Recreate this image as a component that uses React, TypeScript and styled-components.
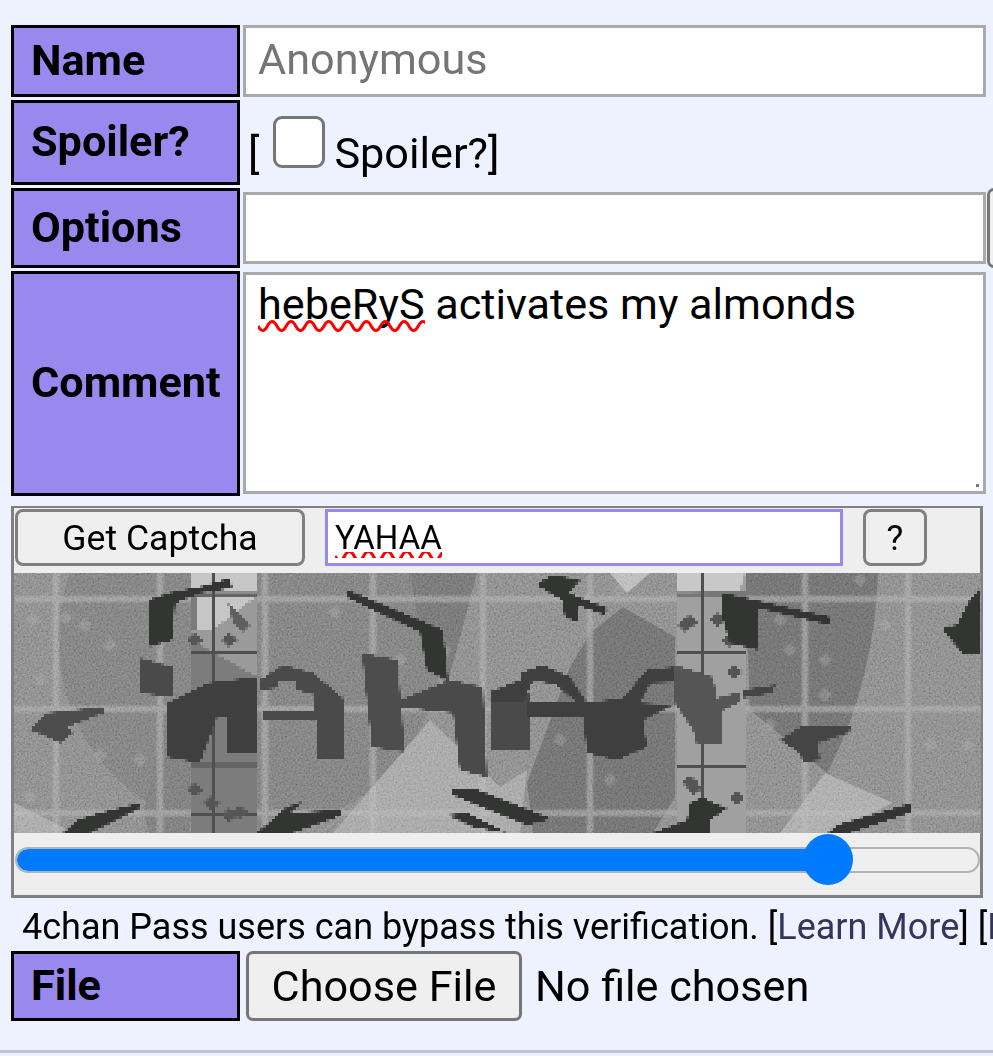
import React from "react";
import styled, { createGlobalStyle } from "styled-components";

const GlobalStyle = createGlobalStyle`
  html, body {
    margin: 0;
    padding: 0;
    background: #eef2ff;
    overflow: hidden;
  }
  body {
    font-family: Roboto, "Liberation Sans", sans-serif;
    color: #000;
  }
`;

const Page = styled.main`
  width: 993px;
  height: 1056px;
  overflow: hidden;
  padding: 25px 0 0 11px;
  box-sizing: border-box;
`;

const FormGrid = styled.div`
  display: grid;
  grid-template-columns: 229px 743px;
  grid-auto-rows: auto;
  gap: 3px;
`;

const Label = styled.div<{ $h: number }>`
  box-sizing: border-box;
  height: ${({ $h }) => $h}px;
  background: #9988ee;
  border: 3px solid #000;
  padding: 0 0 2px 17px;
  display: flex;
  align-items: center;
  font-size: 43.2px;
  font-weight: 700;
`;

const Field = styled.div`
  display: flex;
  align-items: center;
  position: relative;
`;

const TextInput = styled.input<{ $h: number }>`
  box-sizing: border-box;
  width: 743px;
  height: ${({ $h }) => $h}px;
  border: 3px solid #aaa;
  background: #fff;
  padding: 0 12px 3px;
  font: 400 43.2px Roboto, sans-serif;
  outline: none;
  &::placeholder {
    color: #757575;
    opacity: 1;
  }
`;

const OptionsEdge = styled.div`
  position: absolute;
  left: 744px;
  top: 0;
  width: 40px;
  height: 80px;
  box-sizing: border-box;
  border: 3px solid #767676;
  border-radius: 7px;
  background: #efefef;
`;

const SpoilerLine = styled.label`
  font-size: 43.2px;
  padding: 12px 0 0 5px;
  white-space: nowrap;
  line-height: 56px;
`;

const SpoilerBox = styled.input`
  appearance: none;
  box-sizing: border-box;
  width: 52px;
  height: 52px;
  margin: 0 9px 0 14px;
  border: 3px solid #767676;
  border-radius: 9px;
  background: #fff;
  vertical-align: 0;
`;

const CommentBox = styled.div`
  box-sizing: border-box;
  position: relative;
  width: 743px;
  height: 222px;
  align-self: flex-start;
  margin-top: 1px;
  border: 3px solid #aaa;
  background: #fff;
  padding: 4px 12px;
  font-size: 43.2px;
  line-height: 52px;

  &::after {
    content: "";
    position: absolute;
    right: 4px;
    bottom: 4px;
    width: 3px;
    height: 3px;
    background: #777;
  }
`;

const Misspelled = styled.span`
  position: relative;
  display: inline-block;
`;

const Squiggle = styled.svg`
  position: absolute;
  left: 0;
  bottom: -1px;
  width: 100%;
  height: 12px;
  display: block;
`;

const SquiggleCut = styled(Squiggle)`
  height: 6px;
  bottom: 5px;
`;

const CaptchaPanel = styled.section`
  box-sizing: border-box;
  width: 972px;
  height: 392px;
  margin-top: 10px;
  border: 3px solid #808080;
  border-top-width: 2px;
  background: #eee;
  display: flex;
  flex-direction: column;
`;

const CaptchaBar = styled.div`
  height: 65px;
  flex: none;
  display: flex;
  align-items: flex-start;
  padding: 1px 0 0 1px;
  box-sizing: border-box;
`;

const PlainButton = styled.button<{ $w: number; $ml?: number }>`
  box-sizing: border-box;
  width: ${({ $w }) => $w}px;
  height: 57px;
  margin-left: ${({ $ml }) => $ml ?? 0}px;
  border: 3px solid #808080;
  border-radius: 8px;
  background: #efefef;
  color: #000;
  font: 400 35.6px Roboto, sans-serif;
  padding: 0;
`;

const AnswerField = styled.div`
  box-sizing: border-box;
  width: 518px;
  height: 57px;
  margin-left: 20px;
  border: 3px solid #9988ee;
  background: #fff;
  padding: 0 7px;
  font-size: 33px;
  line-height: 51px;
  overflow: hidden;
`;

const CaptchaImage = styled.svg`
  display: block;
  flex: none;
  width: 967px;
  height: 260px;
`;

const SliderWrap = styled.div`
  position: relative;
  flex: 1;
`;

const SliderTrack = styled.div`
  position: absolute;
  left: 1px;
  right: 0;
  top: 14px;
  height: 26px;
  box-sizing: border-box;
  border: 2px solid #b2b2b2;
  border-radius: 13px;
  background: #efefef;
  overflow: hidden;
`;

const SliderFill = styled.div`
  height: 100%;
  background: #007bff;
  border-radius: 13px 0 0 13px;
`;

const SliderThumb = styled.div`
  position: absolute;
  top: 1px;
  width: 50px;
  height: 51px;
  border-radius: 50%;
  background: #007bff;
`;

const PassNote = styled.div`
  width: 982px;
  margin: 11px 0 0;
  padding-left: 11px;
  box-sizing: border-box;
  height: 42px;
  line-height: 37px;
  font-size: 36px;
  white-space: nowrap;
  overflow: hidden;
`;

const NoteLink = styled.a`
  color: #34345c;
  text-decoration: none;
`;

const FileField = styled(Field)`
  gap: 13px;
  font-size: 43.2px;
`;

const FileButton = styled.button`
  box-sizing: border-box;
  width: 276px;
  height: 70px;
  margin-left: 3px;
  border: 3px solid #767676;
  border-radius: 7px;
  background: #efefef;
  color: #000;
  font: 400 43.2px Roboto, sans-serif;
  padding: 0;
`;

const FormRule = styled.hr`
  margin: 29px 0 0 -11px;
  width: 993px;
  height: 3px;
  border: none;
  background: #b7c5d9;
`;

const wave = (w: number, y: number) => {
  let d = `M0 ${y}`;
  for (let x = 0; x < w; x += 9.4) {
    const up = Math.round(x / 9.4) % 2 === 0;
    d += ` Q${x + 4.7} ${up ? y + 9 : y - 9} ${x + 9.4} ${y}`;
  }
  return d;
};

const background: [string, string][] = [
  ["#6c6c6c", "410,573 477,573 448,682 427,672"],
  ["#b4b4b4", "610,573 650,573 627,593"],
  ["#a0a0a0", "14,803 75,833 14,833"],
  ["#9d9d9d", "333,833 430,720 500,787 527,770 520,833"],
  ["#686868", "590,633 623,607 675,637 675,797 653,833 533,833 527,783 570,667"],
  ["#a3a3a3", "780,833 825,773 893,803 828,833"],
  ["#727272", "143,815 170,700 190,700 190,833 150,833"],
];

const gridX = [56, 160, 265, 373, 483, 590, 805, 908];
const gridY = [599, 709, 813];

const strips: [string, string][] = [
  ["#7c7c7c", "190,573 257,573 257,833 190,833"],
  ["#c6c6c6", "190,573 257,573 257,594 190,594"],
  ["#c6c6c6", "196,596 257,596 213,630 196,630"],
  ["#9a9a9a", "213,630 257,596 257,677 213,652 190,640 190,630"],
  ["#a0a0a0", "676,573 745,573 745,833 676,833"],
  ["#c8c8c8", "676,573 745,573 740,590 676,594"],
];

const stripLines = [
  "213,573 213,833",
  "190,594 257,594",
  "190,652 257,652",
  "190,765 257,765",
  "190,814 257,814",
  "703,573 703,833",
  "676,594 745,594",
  "676,652 745,652",
  "676,766 745,766",
];

const midShapes: [string, string][] = [
  ["#4a4a4a", "140,658 172,667 172,697 140,693"],
  ["#3f3f3f", "167,703 208,683 257,677 257,753 228,753 228,717 217,717 200,763 167,757"],
  ["#4a4a4a", "260,680 283,665 313,673 343,698 343,760 317,760 317,720 263,720 263,710 315,710 315,695 297,690 297,680 277,680 277,688 260,690"],
  ["#4d4d4d", "30,730 47,713 103,707 103,713 67,727 73,733 60,743 43,735"],
  ["#4d4d4d", "362,653 397,660 405,752 372,747"],
  ["#4a4a4a", "400,700 450,680 483,687 487,777 460,770 453,713 400,707"],
  ["#4a4a4a", "490,692 530,692 530,750 490,750"],
  ["#3f3f3f", "520,673 543,665 570,677 587,703 623,698 647,670 673,667 673,682 650,683 640,703 673,705 643,720 647,747 617,760 587,753 583,717 527,717 527,703 577,703 557,685 533,680 523,703 490,703 490,692 520,680"],
  ["#555555", "675,665 713,677 717,698 740,692 740,702 723,710 723,743 697,745 693,730 675,703"],
  ["#454545", "743,690 775,685 773,693 743,698"],
  ["#454545", "780,740 800,727 852,727 848,733 818,743 820,760 803,762 800,753"],
  ["#5f5f5f", "228,604 238,612 250,625 243,632 233,622"],
];

const darkShapes = [
  "148,600 173,592 200,587 230,578 232,588 200,593 175,603 172,640 148,647",
  "348,590 443,630 448,680 427,670 420,632 348,598",
  "63,833 77,820 100,813 140,803 140,808 110,823 90,833",
  "257,833 287,807 302,802 290,813 340,810 342,815 293,833",
  "452,788 473,788 547,817 547,820 527,825 477,805 453,795",
  "448,815 467,813 507,833 473,827",
  "540,582 553,575 580,580 568,593 607,608 605,615 577,605 577,622 565,617 562,600 540,587",
  "723,593 830,617 830,625 758,608 758,650 730,643 723,620",
  "981,587 981,653 963,653 945,633 945,627 957,625 970,600",
  "653,833 687,820 690,803 703,797 713,803 727,808 710,820 710,833",
  "828,833 837,825 912,803 912,812 850,833",
];

const specks = [
  [690, 622], [718, 620], [730, 640], [195, 640], [230, 640], [698, 720],
  [195, 790], [212, 803], [230, 815], [695, 788], [737, 798], [240, 812],
  [686, 625], [735, 672], [690, 782],
];

const lightSpecks = [
  [33, 620], [66, 618], [85, 625], [110, 645], [40, 680], [335, 612],
  [400, 660], [445, 650], [30, 797], [620, 590], [780, 620], [790, 650],
  [860, 580], [885, 625], [825, 660], [825, 695], [770, 725], [930, 745],
  [968, 745], [610, 780], [560, 740], [100, 755], [140, 760],
];

const CaptchaPicture = () => (
  <CaptchaImage viewBox="14 573 967 260" preserveAspectRatio="none">
    <defs>
      <filter id="grain" x="0" y="0" width="100%" height="100%">
        <feTurbulence type="fractalNoise" baseFrequency="0.55" numOctaves="2" seed="4" />
        <feColorMatrix
          type="matrix"
          values="0.6 0.6 0 0 -0.15  0.6 0.6 0 0 -0.15  0.6 0.6 0 0 -0.15  0 0 0 0 1"
        />
      </filter>
      <filter id="soft">
        <feGaussianBlur stdDeviation="1.2" />
      </filter>
      <filter
        id="blocky"
        filterUnits="userSpaceOnUse"
        x="14"
        y="573"
        width="967"
        height="260"
        colorInterpolationFilters="sRGB"
      >
        <feFlood x="15" y="574" width="1" height="1" />
        <feComposite x="14" y="573" width="3" height="3" />
        <feTile result="cells" />
        <feComposite in="SourceGraphic" in2="cells" operator="in" />
        <feMorphology operator="dilate" radius="1" />
        <feGaussianBlur stdDeviation="0.35" />
      </filter>
    </defs>
    <rect x="14" y="573" width="967" height="260" fill="#808080" />
    <circle cx="250" cy="640" r="192" fill="#767676" />
    <path d="M745 573 L878 573 Q875 680 827 773 L750 710 Z" fill="#686868" />
    {background.map(([fill, points]) => (
      <polygon key={points} fill={fill} points={points} />
    ))}
    <g filter="url(#soft)" fill="#b4b4b4" opacity="0.45">
      {gridX.map((x) => (
        <rect key={x} x={x - 3} y="573" width="6" height="260" />
      ))}
      {gridY.map((y) => (
        <rect key={y} x="14" y={y - 3} width="967" height="6" />
      ))}
    </g>
    <g fill="#b8b8b8" opacity="0.22" filter="url(#soft)">
      {lightSpecks.map(([x, y]) => (
        <polygon key={`${x}-${y}`} points={`${x - 7},${y} ${x},${y - 7} ${x + 7},${y} ${x},${y + 7}`} />
      ))}
    </g>
    <rect
      x="14"
      y="573"
      width="967"
      height="260"
      filter="url(#grain)"
      opacity="0.4"
      style={{ mixBlendMode: "overlay" }}
    />
    <g filter="url(#blocky)">
      {strips.map(([fill, points]) => (
        <polygon key={points} fill={fill} points={points} />
      ))}
      {stripLines.map((points) => (
        <polyline key={points} points={points} stroke="#4f4f4f" strokeWidth="3" fill="none" />
      ))}
      {specks.map(([x, y]) => (
        <polygon
          key={`${x}-${y}`}
          fill="#555"
          points={`${x - 8},${y} ${x - 1},${y - 7} ${x + 8},${y} ${x - 1},${y + 7}`}
        />
      ))}
      {midShapes.map(([fill, points]) => (
        <polygon key={points} fill={fill} points={points} />
      ))}
      {darkShapes.map((points) => (
        <polygon key={points} fill="#333532" points={points} />
      ))}
    </g>
  </CaptchaImage>
);

export default function App() {
  const sliderValue = 84;

  return (
    <>
      <GlobalStyle />
      <Page>
        <FormGrid>
          <Label $h={72}>Name</Label>
          <Field>
            <TextInput $h={72} placeholder="Anonymous" />
          </Field>

          <Label $h={85}>Spoiler?</Label>
          <Field>
            <SpoilerLine>
              [<SpoilerBox type="checkbox" />Spoiler?]
            </SpoilerLine>
          </Field>

          <Label $h={80}>Options</Label>
          <Field>
            <TextInput $h={72} />
            <OptionsEdge />
          </Field>

          <Label $h={225}>Comment</Label>
          <Field>
            <CommentBox>
              <Misspelled>
                hebeRyS
                <Squiggle viewBox="0 0 166 12" preserveAspectRatio="none">
                  <path d={wave(166, 6)} stroke="#f00" strokeWidth="3" fill="none" />
                </Squiggle>
              </Misspelled>{" "}
              activates my almonds
            </CommentBox>
          </Field>
        </FormGrid>

        <CaptchaPanel>
          <CaptchaBar>
            <PlainButton $w={290} type="button">
              Get Captcha
            </PlainButton>
            <AnswerField>
              <Misspelled>
                YAHAA
                <SquiggleCut viewBox="0 0 105 6" preserveAspectRatio="none">
                  <path d={wave(105, 4)} stroke="#f00" strokeWidth="3" fill="none" />
                </SquiggleCut>
              </Misspelled>
            </AnswerField>
            <PlainButton $w={64} $ml={20} type="button">
              ?
            </PlainButton>
          </CaptchaBar>
          <CaptchaPicture />
          <SliderWrap>
            <SliderTrack>
              <SliderFill style={{ width: `${sliderValue}%` }} />
            </SliderTrack>
            <SliderThumb style={{ left: `calc(${sliderValue}% - 22px)` }} />
          </SliderWrap>
        </CaptchaPanel>

        <PassNote>
          4chan Pass users can bypass this verification. [<NoteLink>Learn More</NoteLink>] [
          <NoteLink>Login</NoteLink>]
        </PassNote>

        <FormGrid>
          <Label $h={70}>File</Label>
          <FileField>
            <FileButton type="button">Choose File</FileButton>
            No file chosen
          </FileField>
        </FormGrid>

        <FormRule />
      </Page>
    </>
  );
}
